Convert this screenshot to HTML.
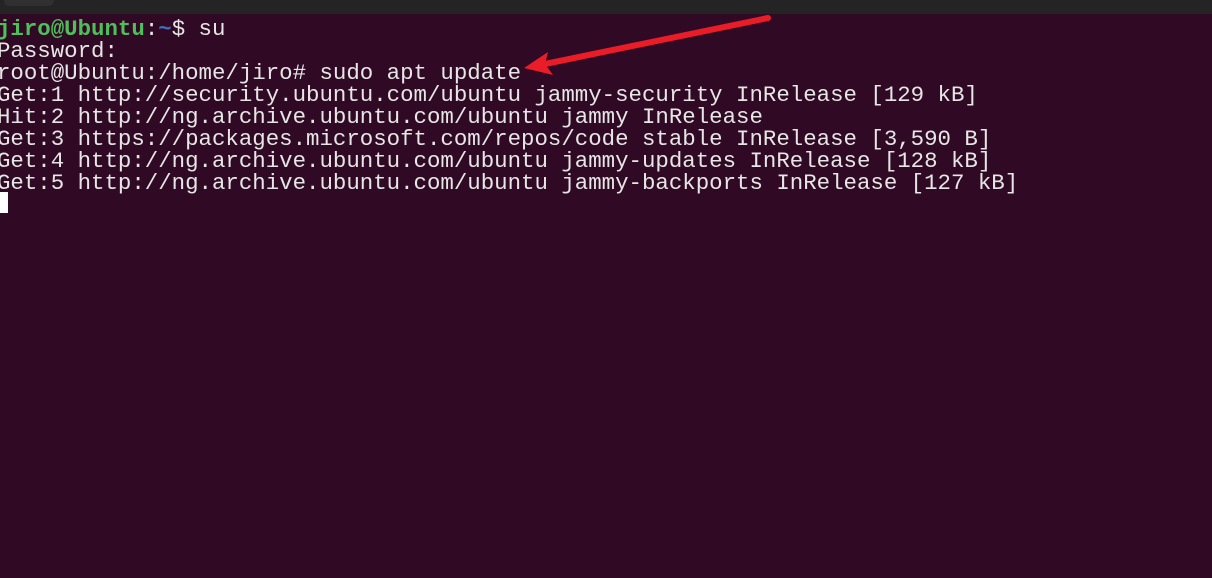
<!DOCTYPE html>
<html><head><style>
html,body{margin:0;padding:0;}
body{width:1212px;height:578px;background:#300a24;position:relative;overflow:hidden;}
.top{position:absolute;left:0;top:0;width:1212px;height:14px;background:#242424;}
.tab{position:absolute;left:4px;top:-6px;width:50px;height:12px;background:#303030;border-radius:6px;}
pre{position:absolute;left:-3px;top:18px;margin:0;font-family:"Liberation Mono",monospace;font-size:22.4px;line-height:22px;color:#e6e6e6;}
.g{color:#4ebf5a;font-weight:bold}.b{color:#3f6fb8;font-weight:bold}
.cur{position:absolute;left:0;top:192px;width:8px;height:21px;background:#fff;}
svg{position:absolute;left:0;top:0;}
</style></head><body>
<div class="top"><div class="tab"></div></div>
<pre><span class="g">jiro@Ubuntu</span>:<span class="b">~</span>$ su
Password:
root@Ubuntu:/home/jiro# sudo apt update
Get:1 http://security.ubuntu.com/ubuntu jammy-security InRelease [129 kB]
Hit:2 http://ng.archive.ubuntu.com/ubuntu jammy InRelease
Get:3 https://packages.microsoft.com/repos/code stable InRelease [3,590 B]
Get:4 http://ng.archive.ubuntu.com/ubuntu jammy-updates InRelease [128 kB]
Get:5 http://ng.archive.ubuntu.com/ubuntu jammy-backports InRelease [127 kB]</pre>
<div class="cur"></div>
<svg width="1212" height="578"><line x1="768" y1="18" x2="545" y2="64" stroke="#ea1c27" stroke-width="6" stroke-linecap="round"/><polygon points="524,68 548,52 545,64 553,75" fill="#ea1c27"/></svg>
</body></html>
